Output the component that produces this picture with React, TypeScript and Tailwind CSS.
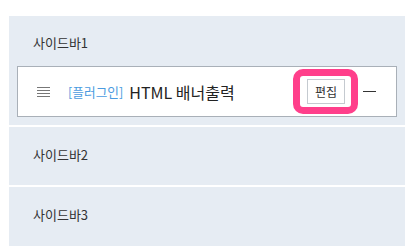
const sidebars = ['사이드바1', '사이드바2', '사이드바3']

function Hamburger() {
  return (
    <svg width="13" height="10" viewBox="0 0 13 10" className="shrink-0">
      <rect x="0" y="0" width="13" height="1" fill="#777" />
      <rect x="0" y="3" width="13" height="1" fill="#777" />
      <rect x="0" y="6" width="13" height="1" fill="#777" />
      <rect x="0" y="9" width="13" height="1" fill="#777" />
    </svg>
  )
}

export default function App() {
  return (
    <div
      className="w-[414px] h-[246px] overflow-hidden bg-white pt-[16px] pl-[9px] pr-[9px]"
      style={{ fontFamily: '"Noto Sans CJK KR", "Noto Sans", sans-serif' }}
    >
      <div className="flex flex-col gap-[2px]">
        {/* Sidebar 1 with widget */}
        <div className="bg-[#e6ecf3] pt-[17px] pb-[8px] px-[8px]">
          <div className="pl-[16px] text-[13px] leading-[20px] text-[#333]">{sidebars[0]}</div>
          <div className="mt-[13px] h-[51px] bg-white border border-[#a9b0b8] flex items-center pl-[19px] pr-[20px]">
            <Hamburger />
            <span className="ml-[18px] text-[12.7px] text-[#4a9be0]">[플러그인]</span>
            <span className="ml-[6px] text-[16px] text-[#222]">HTML 배너출력</span>
            <div className="relative ml-auto">
              <button className="h-[25px] w-[38px] border border-[#c5cad0] bg-white text-[12px] text-[#333] flex items-center justify-center">
                편집
              </button>
              <span className="absolute -left-[14px] -right-[13px] -top-[10px] -bottom-[10px] border-[7px] border-[#ff3f8b] rounded-[10px] pointer-events-none" />
            </div>
            <span className="ml-[18px] w-[13px] h-px bg-[#333]" />
          </div>
        </div>
        {/* Sidebar 2 */}
        <div className="bg-[#e6ecf3] h-[58px] pl-[24px] pt-[18px]">
          <div className="text-[13px] leading-[20px] text-[#333]">{sidebars[1]}</div>
        </div>
        {/* Sidebar 3 */}
        <div className="bg-[#e6ecf3] h-[60px] pl-[24px] pt-[18px]">
          <div className="text-[13px] leading-[20px] text-[#333]">{sidebars[2]}</div>
        </div>
      </div>
    </div>
  )
}
